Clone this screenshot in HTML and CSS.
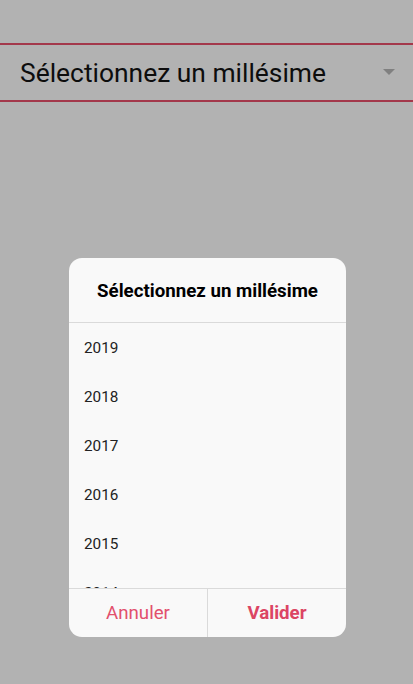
FILE: index.html
```html
<!DOCTYPE html>
<html lang="fr">
<head>
<meta charset="utf-8">
<link rel="stylesheet" href="styles.css">
</head>
<body>
<div class="page">
  <div class="select">
    <span class="select-text">Sélectionnez un millésime</span>
    <span class="select-arrow"></span>
  </div>
</div>
<div class="backdrop">
  <div class="alert">
    <div class="alert-head">Sélectionnez un millésime</div>
    <div class="alert-list">
      <div class="item">2019</div>
      <div class="item">2018</div>
      <div class="item">2017</div>
      <div class="item">2016</div>
      <div class="item">2015</div>
      <div class="item">2014</div>
    </div>
    <div class="alert-buttons">
      <button class="btn">Annuler</button>
      <button class="btn btn-strong">Valider</button>
    </div>
  </div>
</div>
</body>
</html>
```

FILE: styles.css
```css
html, body {
  margin: 0;
  padding: 0;
  width: 413px;
  height: 684px;
  overflow: hidden;
  font-family: Roboto, "Noto Sans", sans-serif;
  background: #b2b2b2;
}
.page {
  padding-top: 43px;
}
.select {
  display: flex;
  align-items: center;
  justify-content: space-between;
  height: 55px;
  border-top: 2px solid #a3384b;
  border-bottom: 2px solid #a3384b;
  padding: 0 18px 0 20px;
}
.select-text {
  font-size: 26.4px;
  color: #0d0d0d;
}
.select-arrow {
  width: 0;
  height: 0;
  border-left: 6px solid transparent;
  border-right: 6px solid transparent;
  border-top: 6px solid #808080;
  margin-top: -1px;
}
.backdrop {
  position: absolute;
  inset: 0;
  display: flex;
  justify-content: center;
  align-items: flex-start;
  padding: 258px 0 0 2px;
}
.alert {
  width: 277px;
  height: 379px;
  background: #f9f9f9;
  border-radius: 13px;
  overflow: hidden;
  display: flex;
  flex-direction: column;
}
.alert-head {
  height: 65px;
  flex: none;
  display: flex;
  align-items: center;
  justify-content: center;
  font-size: 18.7px;
  font-weight: 700;
  color: #000;
  border-bottom: 1px solid #dadada;
  box-sizing: border-box;
  padding-top: 2px;
}
.alert-list {
  flex: 1;
  overflow: hidden;
}
.item {
  height: 49px;
  display: flex;
  align-items: center;
  padding-left: 15px;
  font-size: 15.3px;
  color: #222;
}
.alert-buttons {
  flex: none;
  height: 49px;
  display: flex;
  border-top: 1px solid #dadada;
  box-sizing: border-box;
}
.btn {
  flex: 1;
  border: 0;
  background: transparent;
  font-family: Roboto, "Noto Sans", sans-serif;
  font-size: 18.7px;
  color: #e2506d;
  padding: 0;
}
.btn + .btn {
  border-left: 1px solid #dadada;
}
.btn-strong {
  font-weight: 700;
  color: #dc4563;
}
```
